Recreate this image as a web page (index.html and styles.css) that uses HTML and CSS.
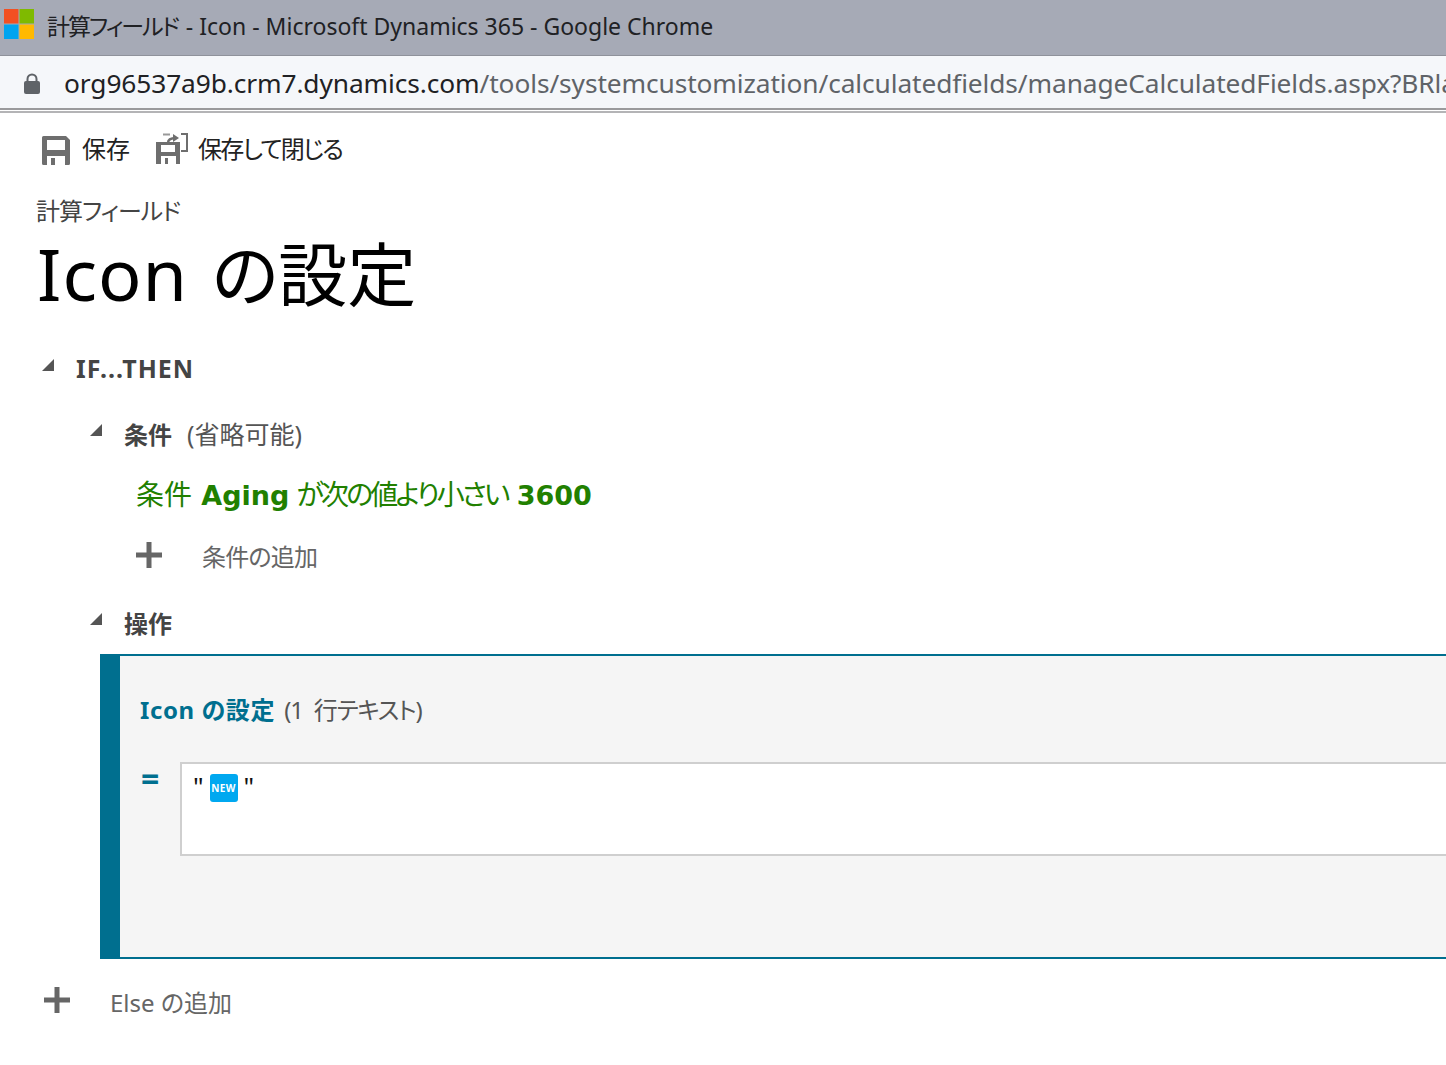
FILE: index.html
```html
<!DOCTYPE html>
<html lang="ja">
<head>
<meta charset="utf-8">
<title>計算フィールド - Icon - Microsoft Dynamics 365</title>
<link rel="stylesheet" href="styles.css">
</head>
<body>
<header class="titlebar">
  <svg class="ms-logo" width="30" height="30" viewBox="0 0 30 30"><rect x="0" y="0" width="14.5" height="14.5" fill="#f25022"/><rect x="15.5" y="0" width="14.5" height="14.5" fill="#7fba00"/><rect x="0" y="15.5" width="14.5" height="14.5" fill="#00a4ef"/><rect x="15.5" y="15.5" width="14.5" height="14.5" fill="#ffb900"/></svg>
  <span class="title-text"><span class="title-cjk">計算フィールド</span> - Icon - Microsoft Dynamics 365 - Google Chrome</span>
</header>
<div class="addressbar">
  <svg class="lock" width="16" height="21" viewBox="0 0 16 21"><path d="M3.5 9V6a4.5 4.5 0 0 1 9 0v3" fill="none" stroke="#5f6368" stroke-width="2"/><rect x="0" y="8" width="16" height="13" rx="2" fill="#5f6368"/></svg>
  <span class="url"><span class="url-host">org96537a9b.crm7.dynamics.com</span>/tools/systemcustomization/calculatedfields/manageCalculatedFields.aspx?BRlayout</span>
</div>
<div class="chrome-gap"></div>
<main class="page">
  <nav class="toolbar">
    <div class="tool tool-save">
      <svg width="28" height="29" viewBox="0 0 28 29"><path d="M1.500 0H24l4 4v23.500a1.500 1.500 0 0 1-1.500 1.500h-25A1.500 1.500 0 0 1 0 27.500V1.500A1.500 1.500 0 0 1 1.500 0z" fill="#6e6e6e"/><rect x="5" y="4" width="18" height="10" fill="#fff"/><rect x="5" y="20" width="18" height="9" fill="#fff"/><rect x="9" y="22" width="4" height="7" fill="#6e6e6e"/></svg>
      <span>保存</span>
    </div>
    <div class="tool tool-close">
      <svg width="32" height="32" viewBox="0 0 32 32"><path d="M0 9h24v22H0z" fill="#6e6e6e"/><rect x="5" y="12" width="14" height="7" fill="#fff"/><rect x="5" y="23" width="15" height="8" fill="#fff"/><rect x="9" y="25" width="3" height="6" fill="#6e6e6e"/><path d="M25 1h6v17h-6" fill="none" stroke="#6e6e6e" stroke-width="2"/><path d="M7 1.500h7" fill="none" stroke="#999" stroke-width="2"/><path d="M12 10c0-3 3-5 8-5" fill="none" stroke="#6e6e6e" stroke-width="2.500"/><path d="M17 1l6 4-6 4z" fill="#6e6e6e"/></svg>
      <span class="tight">保存して閉じる</span>
    </div>
  </nav>
  <div class="eyebrow">計算フィールド</div>
  <h1 class="heading">Icon <span class="heading-cjk">の設定</span></h1>
  <section class="tree">
    <div class="row row-if">
      <svg class="caret" width="12" height="12" viewBox="0 0 12 12"><path d="M12 0v12H0z" fill="#555"/></svg>
      <strong class="label">IF...THEN</strong>
    </div>
    <div class="row row-cond">
      <svg class="caret" width="12" height="12" viewBox="0 0 12 12"><path d="M12 0v12H0z" fill="#555"/></svg>
      <strong class="label">条件</strong><span class="optional">(省略可能)</span>
    </div>
    <div class="condition">条件 <b>Aging</b> <span class="condition-cjk">が次の値より小さい</span> <b>3600</b></div>
    <div class="add add-cond">
      <svg width="26" height="26" viewBox="0 0 26 26"><path d="M10.500 0h5v10.500H26v5H15.500V26h-5V15.500H0v-5h10.500z" fill="#666"/></svg>
      <span class="add-label">条件の追加</span>
    </div>
    <div class="row row-op">
      <svg class="caret" width="12" height="12" viewBox="0 0 12 12"><path d="M12 0v12H0z" fill="#555"/></svg>
      <strong class="label">操作</strong>
    </div>
    <article class="action">
      <div class="action-title"><b>Icon の設定</b> <span class="action-type">(1 行テキスト)</span></div>
      <div class="action-body">
        <span class="equals">=</span>
        <div class="value-box">
          <span class="quote">"</span>
          <span class="new-badge">NEW</span>
          <span class="quote">"</span>
        </div>
      </div>
    </article>
    <div class="add add-else">
      <svg width="26" height="26" viewBox="0 0 26 26"><path d="M10.500 0h5v10.500H26v5H15.500V26h-5V15.500H0v-5h10.500z" fill="#666"/></svg>
      <span>Else の追加</span>
    </div>
  </section>
</main>
</body>
</html>
```
FILE: styles.css
```css
* { box-sizing: border-box; }
html, body { margin: 0; padding: 0; height: 100%; overflow: hidden; background: #fff; }
body { width: 1446px; height: 1065px; font-family: "Noto Sans", "Noto Sans CJK JP", sans-serif; font-feature-settings: "palt"; color: #222; }

.titlebar { height: 56px; background: #a6aab6; border-bottom: 1px solid #8f929b; display: flex; align-items: flex-start; padding: 9px 0 0 4px; }
.ms-logo { flex: none; }
.title-text { margin-left: 13px; font-size: 23px; line-height: 34px; color: #202124; white-space: nowrap; }
.title-cjk { letter-spacing: -2px; margin-right: 2px; }

.addressbar { height: 52px; background: #f5f7fa; display: flex; align-items: center; padding: 2px 0 0 24px; white-space: nowrap; overflow: hidden; }
.lock { flex: none; }
.url { margin-left: 24px; font-size: 26.3px; line-height: 36px; color: #5f6368; letter-spacing: -0.1px; }
.url-host { color: #202124; }

.chrome-gap { height: 5px; border-top: 2px solid #9a9a9c; border-bottom: 2px solid #b4b4b6; background: #fff; }

.page { padding-top: 19px; }
.toolbar { display: flex; align-items: center; height: 34px; padding-left: 42px; gap: 26px; }
.tool { display: flex; align-items: center; font-size: 24px; line-height: 32px; color: #222; }
.tool-save svg { margin: 2px 12px 0 0; }
.tool-close svg { margin: 0 10px 0 0; }
.tight { letter-spacing: -1.7px; }

.eyebrow { margin: 29px 0 0 36px; height: 32px; font-size: 24px; line-height: 32px; color: #444; letter-spacing: -1px; }
.heading { margin: 2px 0 0 37px; height: 88px; font-size: 72px; line-height: 88px; font-weight: 400; color: #000; letter-spacing: 1px; word-spacing: 4px; white-space: nowrap; }
.heading-cjk { font-size: 69px; letter-spacing: 0; }

.tree { margin-top: 34px; }
.row { display: flex; align-items: center; }
.caret { flex: none; }
.label { color: #444; font-weight: 700; }
.row-if { height: 34px; padding-left: 42px; font-size: 25px; }
.row-if .label { letter-spacing: 1px; }
.row-if .caret { margin: -6px 22px 0 0; }
.row-cond { margin-top: 31px; height: 34px; padding-left: 90px; font-size: 24px; }
.row-cond .caret { margin: -6px 22px 0 0; }
.optional { margin-left: 15px; color: #555; font-size: 25px; }
.condition { margin: 24px 0 0 136px; height: 40px; font-size: 28px; line-height: 40px; color: #218000; white-space: nowrap; word-spacing: 2px; }
.condition b { font-family: "DejaVu Sans", sans-serif; font-size: 27px; font-weight: 700; }
.condition-cjk { letter-spacing: -2.9px; margin-left: -2px; }
.add { display: flex; align-items: center; color: #666; font-size: 24px; }
.add-label { letter-spacing: -0.8px; }
.add-cond { margin: 24px 0 0 136px; height: 34px; }
.add-cond svg { margin-right: 40px; }
.row-op { margin-top: 33px; height: 34px; padding-left: 90px; font-size: 24px; }
.row-op .caret { margin: -6px 22px 0 0; }

.action { margin: 15px 0 0 100px; height: 305px; background: #f5f5f5; border-top: 2px solid #006f8f; border-bottom: 2px solid #006f8f; border-left: 20px solid #006f8f; padding: 36px 0 0 20px; }
.action-title { height: 36px; font-size: 24px; line-height: 36px; color: #555; white-space: nowrap; }
.action-title b { color: #006f8f; font-weight: 700; letter-spacing: 0.6px; }
.action-type { margin-left: 3px; letter-spacing: -1.2px; word-spacing: 6px; }
.action-body { display: flex; margin-top: 34px; }
.equals { width: 40px; padding: 1px 0 0 1px; font-size: 32px; line-height: 32px; font-weight: 700; color: #006f8f; }
.value-box { flex: 1; height: 94px; background: #fff; border: 2px solid #cfcfcf; border-right: 0; display: flex; align-items: flex-start; padding: 10px 0 0 11px; }
.quote { font-size: 26px; line-height: 24px; color: #111; }
.new-badge { width: 28px; height: 28px; margin: 0 6px; background: #00a8f0; border-radius: 3px; color: #fff; font-size: 10px; font-weight: 700; line-height: 28px; text-align: center; letter-spacing: 0.4px; }

.add-else { margin: 25px 0 0 44px; height: 34px; }
.add-else svg { margin: -2px 40px 0 0; }
```
